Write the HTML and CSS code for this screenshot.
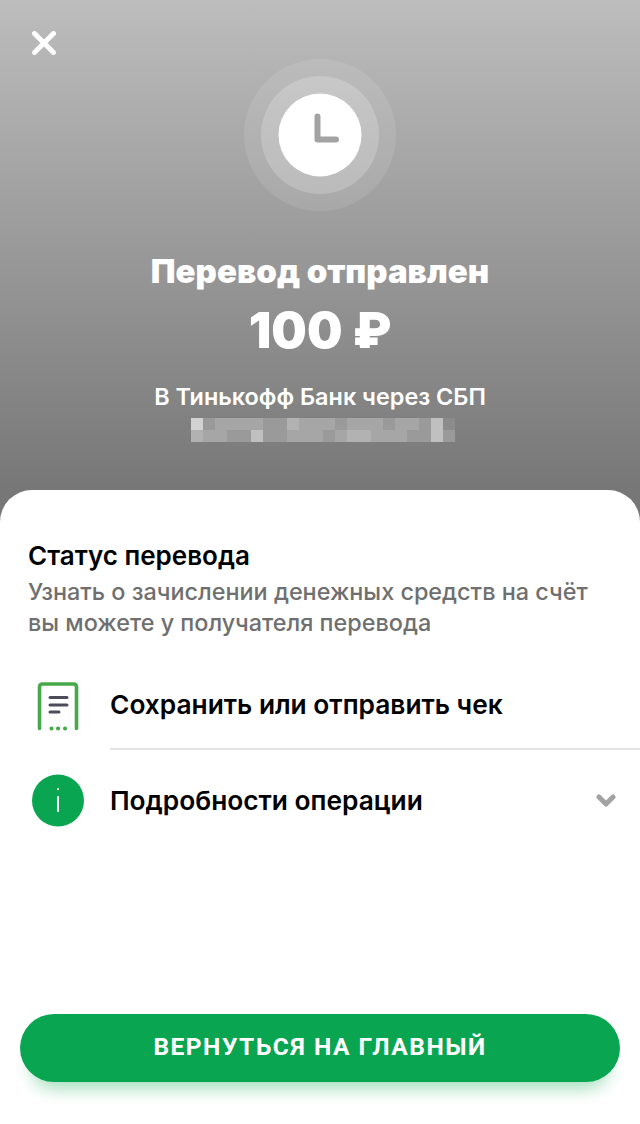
FILE: index.html
```html
<!DOCTYPE html>
<html lang="ru">

<head>
    <meta charset="utf-8">
    <title>Перевод отправлен</title>
    <link rel="stylesheet" href="styles.css">
</head>

<body>
    <div class="screen">
        <div class="hero">
            <div class="hero-top">
                <svg class="close" width="24" height="24" viewBox="0 0 24 24">
                    <path d="M2.5 2.5 L21.5 21.5 M21.5 2.5 L2.5 21.5" />
                </svg>
                <svg class="clock" width="152" height="152" viewBox="0 0 152 152">
                    <circle class="ring-outer" cx="76" cy="76" r="76" />
                    <circle class="ring-inner" cx="76" cy="76" r="59" />
                    <circle class="face" cx="76" cy="76" r="41.5" />
                    <path class="hands" d="M73.5 57.5 V80.5 H92" />
                </svg>
            </div>
            <h1>Перевод отправлен</h1>
            <div class="amount">100 ₽</div>
            <div class="bank">В Тинькофф Банк через СБП</div>
            <div class="blur">
                <span class="s1"></span><span class="s5"></span><span class="s4"></span><span class="s4"></span><span class="s4"></span><span class="s4"></span><span class="s5"></span><span class="s5"></span><span class="s3"></span><span class="s4"></span><span class="s4"></span><span class="s4"></span><span class="s5"></span><span class="s4"></span><span class="s4"></span><span class="s4"></span><span class="s5"></span><span class="s4"></span><span class="s4"></span><span class="s5"></span><span class="s2"></span><span class="s6"></span>
                <span class="s3"></span><span class="s4"></span><span class="s4"></span><span class="s5"></span><span class="s5"></span><span class="s2"></span><span class="s5"></span><span class="s5"></span><span class="s4"></span><span class="s4"></span><span class="s4"></span><span class="s5"></span><span class="s4"></span><span class="s3"></span><span class="s3"></span><span class="s4"></span><span class="s4"></span><span class="s4"></span><span class="s5"></span><span class="s5"></span><span class="s2"></span><span class="s5"></span>
            </div>
        </div>

        <div class="card">
            <h2>Статус перевода</h2>
            <p>Узнать о зачислении денежных средств на счёт<br>вы можете у получателя перевода</p>

            <div class="row row-first">
                <svg class="row-icon" width="53" height="53" viewBox="0 0 53 53">
                    <path class="receipt" d="M7.5 49.5 V8 Q7.5 5 10.5 5 H41.5 Q44.5 5 44.5 8 V49.5" />
                    <path class="receipt-dots" d="M19.5 49.5 H19.6 M26 49.5 H26.1 M33 49.5 H33.1" />
                    <path class="receipt-lines" d="M18 18.5 H35 M18 26 H35 M18 33 H27" />
                </svg>
                <div class="row-body">Сохранить или отправить чек</div>
            </div>

            <div class="row">
                <svg class="row-icon" width="53" height="53" viewBox="0 0 53 53">
                    <circle class="info" cx="26" cy="26.5" r="26" />
                    <path class="info-mark" d="M26 23 V37 M26 15 V15.2" />
                </svg>
                <div class="row-body row-last">
                    Подробности операции
                    <svg class="chevron" width="20" height="14" viewBox="0 0 20 14">
                        <path d="M3 3 L10 10 L17 3" />
                    </svg>
                </div>
            </div>

            <div class="footer">
                <button class="back-btn">ВЕРНУТЬСЯ НА ГЛАВНЫЙ</button>
            </div>
        </div>
    </div>
</body>

</html>
```

FILE: styles.css
```css
* {
    box-sizing: border-box;
}

body {
    margin: 0;
    font-family: Inter, "Noto Sans", sans-serif;
    background: #fff;
}

.screen {
    width: 640px;
    height: 1124px;
    overflow: hidden;
    background: linear-gradient(#bdbdbd 0, #777 490px);
}

/* top gray part */
.hero {
    height: 490px;
    color: #fff;
    text-align: center;
}

.hero-top {
    display: grid;
    grid-template-columns: 1fr 152px 1fr;
    align-items: start;
    height: 211px;
}

.close {
    margin: 31px 0 0 32px;
}

.close path {
    stroke: #fff;
    stroke-width: 5;
    stroke-linecap: round;
    fill: none;
}

.clock {
    margin-top: 59px;
}

.ring-outer {
    fill: #fff;
    fill-opacity: 0.1;
}

.ring-inner {
    fill: #fff;
    fill-opacity: 0.2;
}

.face {
    fill: #fff;
}

.hands {
    fill: none;
    stroke: #a3a3a3;
    stroke-width: 6;
    stroke-linecap: round;
    stroke-linejoin: round;
}

h1 {
    margin: 39px 0 0;
    font-size: 33px;
    line-height: 42px;
    font-weight: 900;
}

.amount {
    margin-top: 8px;
    font-size: 50px;
    line-height: 60px;
    font-weight: 900;
}

.bank {
    margin-top: 22px;
    font-size: 23.4px;
    line-height: 30px;
    font-weight: 600;
}

.blur {
    display: grid;
    grid-template-columns: repeat(22, 12px);
    grid-auto-rows: 12px;
    justify-content: center;
    margin-top: 6px;
    padding-left: 6px;
}

.s1 { background: #d2d2d2; }
.s2 { background: #c0c0c0; }
.s3 { background: #b2b2b2; }
.s4 { background: #a6a6a6; }
.s5 { background: #9a9a9a; }
.s6 { background: #8c8c8c; }

/* white sheet */
.card {
    height: 634px;
    padding-top: 50px;
    background: #fff;
    border-radius: 32px 32px 0 0;
}

h2 {
    margin: 0 28px;
    font-size: 26px;
    line-height: 32px;
    font-weight: 600;
    color: #000;
}

.card p {
    margin: 4px 0 0 28px;
    font-size: 23.4px;
    line-height: 31px;
    font-weight: 500;
    color: #6f6f6f;
}

.row {
    display: flex;
    align-items: center;
    height: 100px;
    padding-top: 1px;
    font-size: 26.3px;
    font-weight: 600;
    color: #000;
}

.row-first {
    height: 91px;
    margin-top: 21px;
}

.row-icon {
    flex: none;
    margin: 0 25px 0 32px;
}

.row-body {
    display: flex;
    align-items: center;
    justify-content: space-between;
    flex: 1;
    height: 100%;
    border-bottom: 2px solid #e4e4e4;
}

.row-last {
    border-bottom: 0;
    padding-right: 24px;
}

.receipt {
    fill: none;
    stroke: #45a849;
    stroke-width: 3.6;
    stroke-linecap: round;
}

.receipt-dots {
    fill: none;
    stroke: #45a849;
    stroke-width: 4;
    stroke-linecap: round;
}

.receipt-lines {
    fill: none;
    stroke: #4b4b5a;
    stroke-width: 3;
    stroke-linecap: round;
}

.info {
    fill: #0aa551;
}

.info-mark {
    fill: none;
    stroke: #fff;
    stroke-width: 2;
    stroke-linecap: round;
}

.chevron path {
    fill: none;
    stroke: #a2a2a2;
    stroke-width: 5;
    stroke-linecap: round;
    stroke-linejoin: round;
}

.footer {
    height: 103px;
    margin-top: 151px;
    padding: 13px 20px 0;
    overflow: hidden;
}

.back-btn {
    display: block;
    width: 100%;
    height: 68px;
    padding-bottom: 4px;
    border: 0;
    border-radius: 34px;
    background: #0aa551;
    color: #fff;
    font-family: Roboto, sans-serif;
    font-size: 24.5px;
    font-weight: 700;
    letter-spacing: 1.5px;
    box-shadow: 0 18px 18px -12px rgba(10, 165, 81, 0.4);
}
```
